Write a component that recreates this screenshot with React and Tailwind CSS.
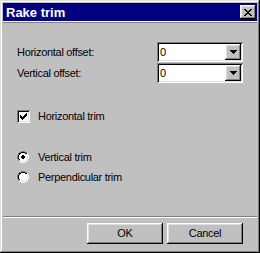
import React from "react";

const font = "font-['Liberation_Sans',Arial,sans-serif]";

function Raised({ className = "", children }) {
  return (
    <div
      className={
        "bg-[#c0c0c0] shadow-[inset_-1px_-1px_#000000,inset_1px_1px_#ffffff,inset_-2px_-2px_#808080,inset_2px_2px_#dfdfdf] " +
        className
      }
    >
      {children}
    </div>
  );
}

function ArrowDown() {
  return (
    <svg width="7" height="4" viewBox="0 0 7 4" shapeRendering="crispEdges">
      <path d="M0 0h7v1H0zM1 1h5v1H1zM2 2h3v1H2zM3 3h1v1H3z" fill="#000" />
    </svg>
  );
}

function Combo() {
  return (
    <div className="w-[86px] h-[20px] bg-white flex items-stretch shadow-[inset_1px_1px_#808080,inset_-1px_-1px_#ffffff,inset_2px_2px_#000000,inset_-2px_-2px_#dfdfdf] p-[2px]">
      <div className="flex-1 flex items-center pl-[1px] text-[11px] text-black leading-none">0</div>
      <Raised className="w-[16px] flex items-center justify-center">
        <ArrowDown />
      </Raised>
    </div>
  );
}

function Check() {
  return (
    <div className="w-[13px] h-[13px] bg-white shadow-[inset_1px_1px_#808080,inset_-1px_-1px_#ffffff,inset_2px_2px_#000000,inset_-2px_-2px_#dfdfdf] flex items-center justify-center">
      <svg width="7" height="7" viewBox="0 0 7 7" shapeRendering="crispEdges">
        <path
          d="M6 0h1v1H6zM5 1h2v1H5zM0 2h1v1H0zM4 2h3v1H4zM0 3h2v1H0zM3 3h3v1H3zM0 4h5v1H0zM1 5h3v1H1zM2 6h1v1H2z"
          fill="#000"
        />
      </svg>
    </div>
  );
}

function Radio({ on }) {
  return (
    <svg width="12" height="12" viewBox="0 0 12 12" shapeRendering="crispEdges">
      <path d="M4 0h4v1H4zM2 1h2v1H2zM8 1h2v1H8zM1 2h1v2H1zM0 4h1v4H0zM1 8h1v2H1z" fill="#808080" />
      <path d="M10 2h1v2h-1zM11 4h1v4h-1zM10 8h1v2h-1zM8 10h2v1H8zM2 10h2v1H2zM4 11h4v1H4z" fill="#ffffff" />
      <path d="M4 1h4v1H4zM2 2h2v1H2zM8 2h2v1H8zM2 3h1v1H2zM1 4h1v4H1zM2 8h1v1H2z" fill="#000000" />
      <path d="M9 3h1v1H9zM10 4h1v4h-1zM9 8h1v1H9zM8 9h2v1H8zM2 9h2v1H2zM4 10h4v1H4z" fill="#dfdfdf" />
      <path d="M4 2h4v1H4zM3 3h6v1H3zM2 4h8v4H2zM3 8h6v1H3zM4 9h4v1H4z" fill="#ffffff" />
      {on && <path d="M5 4h2v1H5zM4 5h4v2H4zM5 7h2v1H5z" fill="#000" />}
    </svg>
  );
}

function Btn({ children }) {
  return (
    <Raised className="w-[76px] h-[21px] flex items-center justify-center text-[11px] text-black tracking-[-0.3px]">
      {children}
    </Raised>
  );
}

export default function App() {
  return (
    <div
      className={
        "w-[260px] h-[253px] bg-[#c0c0c0] p-[3px] flex flex-col shadow-[inset_-1px_-1px_#000000,inset_1px_1px_#dfdfdf,inset_-2px_-2px_#808080,inset_2px_2px_#ffffff] select-none " +
        font
      }
    >
      <div className="h-[18px] bg-[#000080] flex items-center pl-[3px] pr-[1px] shrink-0">
        <span className="text-white font-bold text-[13px] leading-none">Rake trim</span>
        <div className="ml-auto">
          <Raised className="w-[16px] h-[14px] flex items-center justify-center">
            <svg width="8" height="7" viewBox="0 0 8 7" shapeRendering="crispEdges">
              <path
                d="M0 0h2v1H0zM6 0h2v1H6zM1 1h2v1H1zM5 1h2v1H5zM2 2h4v1H2zM3 3h2v1H3zM2 4h4v1H2zM1 5h2v1H1zM5 5h2v1H5zM0 6h2v1H0zM6 6h2v1H6z"
                fill="#000"
              />
            </svg>
          </Raised>
        </div>
      </div>
      <div className="h-[1px] bg-white shrink-0" />
      <div className="h-[1px] bg-[#808080] shrink-0" />

      <div className="pl-[14px] pr-[14px] text-[11px] text-black leading-none tracking-[-0.3px]">
        <div className="mt-[19px] flex flex-col gap-[1px]">
          <div className="h-[20px] flex items-center justify-between">
            <span>Horizontal offset:</span>
            <Combo />
          </div>
          <div className="h-[20px] flex items-center justify-between">
            <span>Vertical offset:</span>
            <Combo />
          </div>
        </div>

        <div className="mt-[27px] h-[13px] flex items-center gap-[8px]">
          <Check />
          <span>Horizontal trim</span>
        </div>

        <div className="mt-[24px] flex flex-col">
          <div className="h-[20px] flex items-center gap-[9px]">
            <Radio on />
            <span>Vertical trim</span>
          </div>
          <div className="h-[20px] flex items-center gap-[9px]">
            <Radio />
            <span>Perpendicular trim</span>
          </div>
        </div>
      </div>

      <div className="mt-[29px] h-[1px] bg-[#808080] shrink-0" />
      <div className="h-[1px] bg-white shrink-0" />

      <div className="mt-[5px] flex justify-end gap-[4px] pr-[14px]">
        <Btn>OK</Btn>
        <Btn>Cancel</Btn>
      </div>
    </div>
  );
}
